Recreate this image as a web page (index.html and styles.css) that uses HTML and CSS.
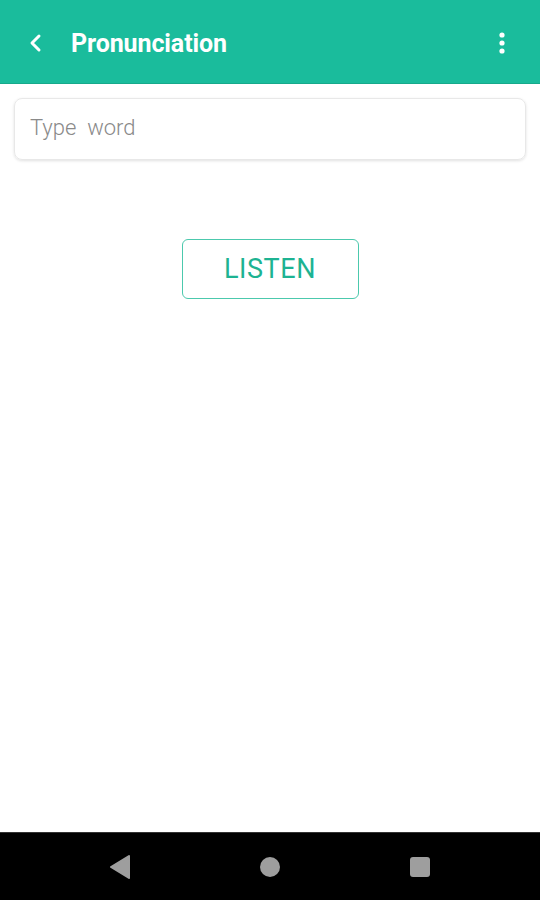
FILE: index.html
```html
<!DOCTYPE html>
<html lang="en">
<head>
    <meta charset="UTF-8">
    <meta name="viewport" content="width=device-width, initial-scale=1.0">
    <title>Pronunciation</title>
    <link rel="stylesheet" href="styles.css">
</head>
<body>
    <div class="screen">
        <header class="toolbar">
            <svg class="back" width="24" height="24" viewBox="0 0 24 24">
                <path d="M15 5 L8 12 L15 19" fill="none" stroke="#fff" stroke-width="3" stroke-linecap="round" stroke-linejoin="round"/>
            </svg>
            <h1 class="title">Pronunciation</h1>
            <svg class="menu" width="8" height="24" viewBox="0 0 8 24">
                <circle cx="4" cy="4" r="2.6" fill="#fff"/>
                <circle cx="4" cy="12" r="2.6" fill="#fff"/>
                <circle cx="4" cy="20" r="2.6" fill="#fff"/>
            </svg>
        </header>

        <main class="content">
            <div class="word-box">
                <input class="word-input" type="text" placeholder="Type  word">
            </div>
            <button class="listen-btn">LISTEN</button>
        </main>

        <nav class="navbar">
            <svg width="22" height="26" viewBox="0 0 22 26">
                <path d="M20 2 L2 13 L20 24 Z" fill="#9e9e9e" stroke="#9e9e9e" stroke-width="2" stroke-linejoin="round"/>
            </svg>
            <svg width="22" height="22" viewBox="0 0 22 22">
                <circle cx="11" cy="11" r="10" fill="#9e9e9e"/>
            </svg>
            <svg width="22" height="22" viewBox="0 0 22 22">
                <rect x="1" y="1" width="20" height="20" rx="3" fill="#9e9e9e"/>
            </svg>
        </nav>
    </div>
</body>
</html>
```

FILE: styles.css
```css
body {
    margin: 0;
    font-family: Roboto, 'Liberation Sans', sans-serif;
    background-color: #fff;
}

.screen {
    display: flex;
    flex-direction: column;
    height: 900px;
}

.toolbar {
    display: flex;
    align-items: center;
    height: 84px;
    background-color: #1abc9c;
    border-bottom: 1px solid #17a98b;
    padding: 3px 34px 0 24px;
    box-sizing: border-box;
}

.back {
    margin-right: 23px;
}

.title {
    flex: 1;
    margin: 0;
    color: #fff;
    font-size: 25px;
    font-weight: bold;
    letter-spacing: -0.1px;
}

.content {
    flex: 1;
    display: flex;
    flex-direction: column;
    align-items: center;
    padding: 14px 14px 0;
}

.word-box {
    align-self: stretch;
    height: 62px;
    border: 1px solid #e8e8e8;
    border-radius: 8px;
    box-shadow: 0 1px 3px rgba(0, 0, 0, 0.12);
    display: flex;
    align-items: center;
    padding: 0 15px 4px;
    box-sizing: border-box;
}

.word-input {
    flex: 1;
    border: none;
    outline: none;
    font-family: Roboto, 'Liberation Sans', sans-serif;
    font-size: 22px;
    font-weight: 300;
    color: #333;
    padding: 0;
    background: transparent;
}

.word-input::placeholder {
    color: #8a8a8a;
}

.listen-btn {
    margin-top: 79px;
    width: 177px;
    height: 60px;
    background: #fff;
    border: 1px solid #4cc9ad;
    border-radius: 6px;
    color: #1db392;
    font-family: Roboto, 'Liberation Sans', sans-serif;
    font-size: 27px;
    letter-spacing: 0.6px;
}

.navbar {
    height: 67px;
    background-color: #000;
    border-top: 1px solid #333;
    display: flex;
    align-items: center;
    justify-content: center;
    gap: 128px;
}
```
